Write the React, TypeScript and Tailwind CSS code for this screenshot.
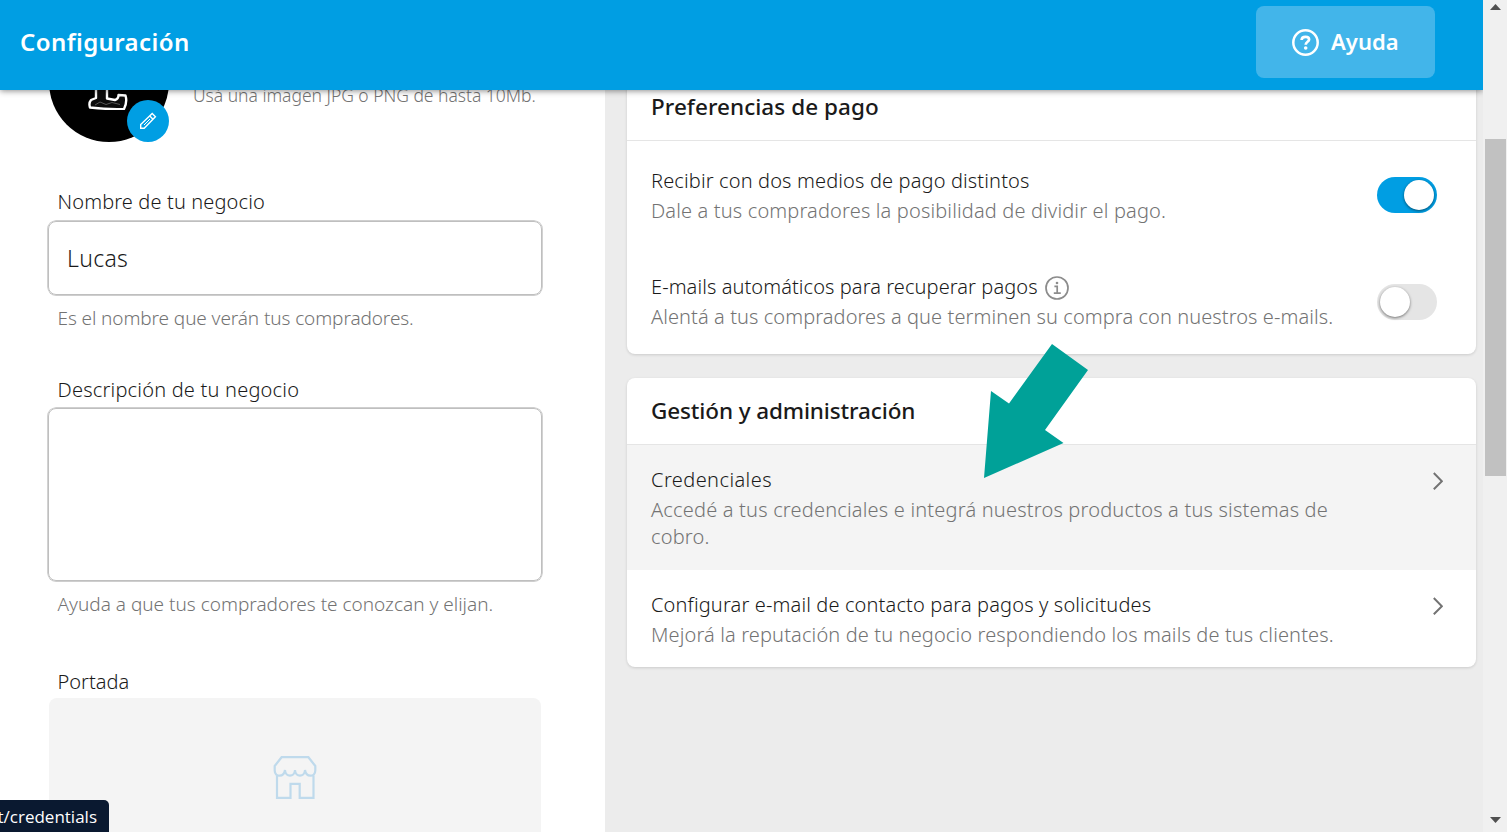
import type { ReactNode } from 'react';

function PencilIcon() {
  return (
    <svg width="18" height="18" viewBox="0 0 18 18" fill="none" stroke="white" strokeWidth="1.4" strokeLinejoin="miter">
      <path d="M1.700 16.300V12.600L13.200 1.600L16.400 4.800L5.200 16.300Z" />
      <path d="M10.800 4L14 7.200" />
      <path d="M11 7L5 13" strokeWidth="1" />
    </svg>
  );
}

function HelpIcon() {
  return (
    <svg width="28" height="28" viewBox="0 0 28 28" fill="none" stroke="white">
      <circle cx="14.500" cy="14.500" r="12.200" strokeWidth="2.500" />
      <path d="M10.600 12C10.700 9.800 12.300 8.900 14.500 8.900C16.700 8.900 18.100 9.900 18.100 11.500C18.100 13.900 14.700 13.700 14.700 16.700" strokeWidth="2.700" />
      <circle cx="14.700" cy="20" r="1.800" fill="white" stroke="none" />
    </svg>
  );
}

function InfoIcon() {
  return (
    <svg className="mt-[2px]" width="24" height="24" viewBox="0 0 24 24" fill="none" stroke="#8c8c8c">
      <circle cx="12" cy="12" r="11" strokeWidth="1.7" />
      <path d="M9.400 10.400H12.200V16.900M8.800 17.200H15.800" strokeWidth="1.700" />
      <circle cx="12" cy="7" r="1.300" fill="#8c8c8c" stroke="none" />
    </svg>
  );
}

function Chevron() {
  return (
    <svg className="mr-[9px] mt-[3px] shrink-0" width="10" height="18" viewBox="0 0 10 18" fill="none" stroke="#737373" strokeWidth="2">
      <path d="M0.8 1L8.900 9.200L0.8 17.300" />
    </svg>
  );
}

function StoreIcon() {
  return (
    <svg width="44" height="44" viewBox="0 0 44 44" fill="none" stroke="#bfdaec" strokeWidth="2.200">
      <path d="M1.700 11L8.600 2.200H35.400L42.300 11V15.500C42.300 22.500 33 22.500 32 15C31.600 22.500 22.400 22.500 22 15C21.600 22.500 12.400 22.500 12 15C11 22.500 1.700 22.500 1.700 15.500Z" />
      <path d="M4 20.500V42.800H17.500V28.800H26.700V42.800H40.500V20.500" />
    </svg>
  );
}

function Toggle({ on }: { on: boolean }) {
  return (
    <span className={on ? 'flex h-9 w-[60px] justify-end rounded-full bg-[#009ee3] p-[3px]' : 'flex h-9 w-[60px] rounded-full bg-[#e5e5e5] p-[3px]'}>
      <span className="size-[30px] rounded-full bg-white shadow-[0_1px_3px_rgba(0,0,0,0.5)]" />
    </span>
  );
}

function Card({ title, tracking, children }: { title: string; tracking: string; children: ReactNode }) {
  return (
    <section className="overflow-hidden rounded-lg bg-white shadow-[0_1px_3px_rgba(0,0,0,0.14)]">
      <h2 className={`flex h-[67px] items-center border-b border-[#e5e5e5] pl-6 text-[22.5px] font-medium ${tracking}`}>{title}</h2>
      {children}
    </section>
  );
}

function RowText({ title, titleTracking, sub, subTracking, icon }: { title: string; titleTracking: string; sub: ReactNode; subTracking: string; icon?: ReactNode }) {
  return (
    <div className="whitespace-nowrap">
      <div className="flex h-[30px] items-center gap-[7px]">
        <span className={titleTracking}>{title}</span>
        {icon}
      </div>
      <p className={`mt-px leading-[27px] text-[#737373] ${subTracking}`}>{sub}</p>
    </div>
  );
}

export default function App() {
  return (
    <div className="relative flex h-[832px] w-[1507px] overflow-hidden bg-[#ececec] font-['Noto_Sans',sans-serif] text-[20px] font-light text-[#1a1a1a]">
      <div className="flex w-[1483px] flex-col">
        <header className="z-10 flex h-[90px] shrink-0 justify-between bg-[#009ee3] pl-5 pr-12 pt-[6px] text-white shadow-[0_1px_6px_rgba(0,0,0,0.45)]">
          <h1 className="flex h-[72px] items-center text-[24px] font-semibold tracking-[0.4px]">Configuración</h1>
          <button className="flex h-[72px] w-[179px] items-center gap-3 rounded-lg bg-[#42b5ea] pl-[35px] text-[22px] font-semibold tracking-[0.05px]">
            <HelpIcon />
            <span className="-mt-px">Ayuda</span>
          </button>
        </header>

        <div className="flex h-[742px] overflow-hidden">
          <main className="w-[605px] bg-white pl-12">
            <div className="-mt-[68px] flex h-[120px]">
              <div className="relative ml-[1px] size-[120px] rounded-full bg-black">
                <svg className="absolute left-[38px] top-[60px]" width="44" height="28" viewBox="0 0 44 28" fill="#0c0c0c" stroke="white" strokeWidth="2.400" strokeLinejoin="round">
                  <path d="M9 0V16L4 18Q1.500 21 3 25.500Q20 27.500 37 27Q40.500 20 38.500 13.500L31.500 13Q31.500 17 28 18L20 16.500V0Z" />
                  <path d="M8 23L13 20L19 22.500L25 20.500L33 22.500" stroke="#555" strokeWidth="1" fill="none" />
                </svg>
                <span className="absolute bottom-0 right-0 flex size-[42px] items-center justify-center rounded-full bg-[#009ee3]">
                  <PencilIcon />
                </span>
              </div>
              <p className="ml-6 mt-[59px] whitespace-nowrap text-[17.5px] leading-7 tracking-[-0.02px] text-[#737373]">Usá una imagen JPG o PNG de hasta 10Mb.</p>
            </div>

            <label className="ml-[9.5px] mt-[45px] flex h-[30px] items-center tracking-[0.13px]">Nombre de tu negocio</label>
            <div className="mt-[4px] flex h-[74px] w-[494px] items-center rounded-lg border border-[#bfbfbf] pl-[18px] text-[23px] tracking-[0.3px] shadow-[0_0_0_0.7px_#bfbfbf]">Lucas</div>
            <p className="ml-[9.5px] mt-[9px] h-[28px] text-[19px] leading-7 tracking-[-0.1px] text-[#737373]">Es el nombre que verán tus compradores.</p>

            <label className="ml-[9.5px] mt-[43px] flex h-[30px] items-center tracking-[0.2px]">Descripción de tu negocio</label>
            <div className="mt-[3px] h-[173px] w-[494px] rounded-lg border border-[#bfbfbf] shadow-[0_0_0_0.7px_#bfbfbf]" />
            <p className="ml-[9.5px] mt-[9px] h-[28px] text-[19px] leading-7 text-[#737373]">Ayuda a que tus compradores te conozcan y elijan.</p>

            <label className="ml-[9.5px] mt-[49px] flex h-[30px] items-center">Portada</label>
            <div className="ml-px mt-[1px] flex h-[158px] w-[492px] items-center justify-center rounded-lg bg-[#f4f4f4]">
              <StoreIcon />
            </div>
          </main>

          <aside className="-mt-[16px] ml-[22px] flex w-[849px] flex-col gap-6">
            <Card title="Preferencias de pago" tracking="tracking-[0.05px]">
              <div className="flex justify-between pl-6 pr-[39px] pt-[25px]">
                <RowText title="Recibir con dos medios de pago distintos" titleTracking="tracking-[0.14px]" sub="Dale a tus compradores la posibilidad de dividir el pago." subTracking="tracking-[0.15px]" />
                <div className="pt-[11px]"><Toggle on /></div>
              </div>
              <div className="flex justify-between pb-6 pl-6 pr-[39px] pt-[48px]">
                <RowText title="E-mails automáticos para recuperar pagos" titleTracking="tracking-[0.08px]" icon={<InfoIcon />} sub="Alentá a tus compradores a que terminen su compra con nuestros e-mails." subTracking="tracking-[0.08px]" />
                <div className="h-10 pt-3"><Toggle on={false} /></div>
              </div>
            </Card>

            <Card title="Gestión y administración" tracking="tracking-[-0.12px]">
              <div className="flex justify-between bg-[#f4f4f4] pb-5 pl-6 pr-6 pt-5">
                <RowText title="Credenciales" titleTracking="tracking-[0.42px]" sub={<>Accedé a tus credenciales e integrá nuestros productos a tus sistemas de<br />cobro.</>} subTracking="tracking-[0.19px]" />
                <div className="pt-1"><Chevron /></div>
              </div>
              <div className="flex justify-between pb-[19px] pl-6 pr-6 pt-5">
                <RowText title="Configurar e-mail de contacto para pagos y solicitudes" titleTracking="tracking-[0.14px]" sub="Mejorá la reputación de tu negocio respondiendo los mails de tus clientes." subTracking="tracking-[0.13px]" />
                <div className="pt-1"><Chevron /></div>
              </div>
            </Card>
          </aside>
        </div>
      </div>

      <div className="z-20 flex w-6 flex-col items-center bg-[#f0f0f0]">
        <svg className="mt-1 h-[6px] w-[11px]" viewBox="0 0 11 6" fill="#505050"><path d="M5.500 0L11 6H0Z" /></svg>
        <div className="mt-[129px] h-[337px] w-[21px] bg-[#c1c1c1]" />
        <svg className="mb-[9px] mt-auto h-[6px] w-[11px]" viewBox="0 0 11 6" fill="#505050"><path d="M0 0H11L5.500 6Z" /></svg>
      </div>

      <svg className="absolute left-[984px] top-[344px] z-20" width="104" height="134" viewBox="0 0 104 134" fill="#00a198">
        <path d="M68 0L104 26L61 86L79.500 99L0 134L7 47L25 59.500Z" />
      </svg>

      <div className="absolute bottom-0 left-0 z-20 flex h-8 w-[109px] items-center justify-end overflow-hidden rounded-tr-[5px] bg-[#0a1930] pr-3 pt-[2px] font-['Open_Sans',sans-serif] text-[17px] font-normal text-white">
        t/credentials
      </div>
    </div>
  );
}
